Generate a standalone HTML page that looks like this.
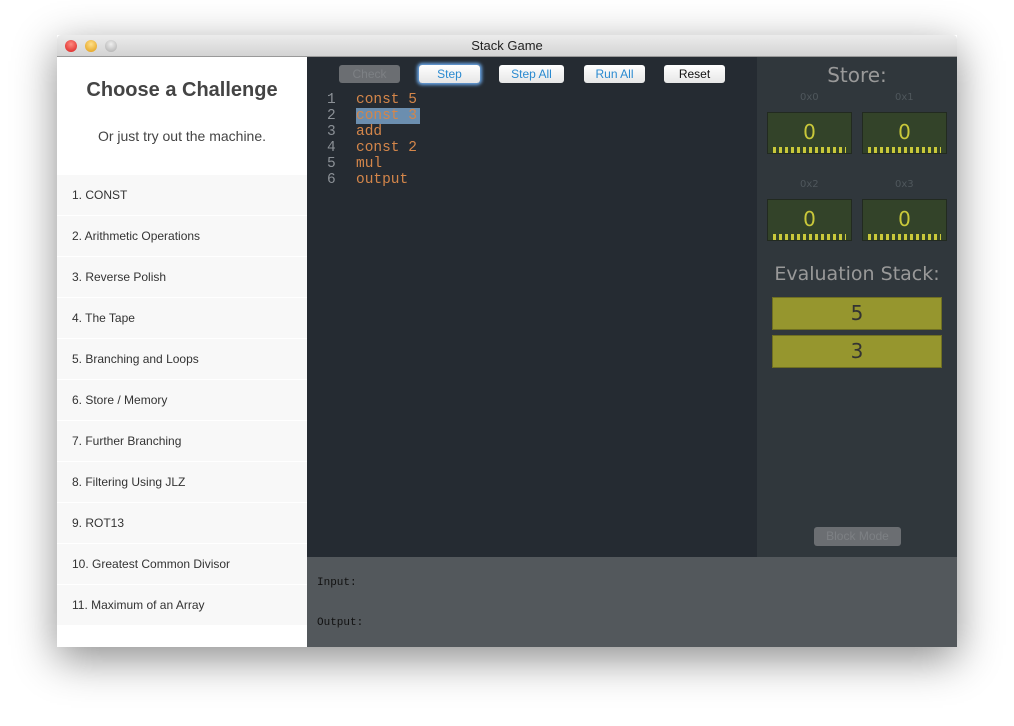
<!DOCTYPE html>
<html><head><style>
*{margin:0;padding:0;box-sizing:border-box}
body{width:1014px;height:726px;background:#fff;position:relative;font-family:"Liberation Sans",sans-serif;overflow:hidden}
.win{position:absolute;left:57px;top:35px;width:900px;height:612px;box-shadow:0 12px 40px rgba(0,0,0,.45);background:#fff}
.title{position:absolute;left:0;top:0;width:900px;height:22px;background:linear-gradient(#ececec,#d3d3d3);border-bottom:1px solid #999;text-align:center;font-size:13px;line-height:22px;color:#222;border-radius:4px 4px 0 0}
.dot{position:absolute;top:5px;width:12px;height:12px;border-radius:50%}
.abs{position:absolute}
.side{left:0;top:22px;width:250px;height:590px;background:#fff}
.li{position:absolute;left:0;width:250px;height:40px;background:#f8f8f8;font-size:12px;color:#333;padding-left:15px;line-height:40px}
.ed{left:250px;top:22px;width:450px;height:500px;background:#252b32}
.st{left:700px;top:22px;width:200px;height:500px;background:#30373c}
.bot{left:250px;top:522px;width:650px;height:90px;background:#53585c;font-family:"Liberation Mono",monospace;font-size:11px;color:#111}
.btn{position:absolute;top:8px;height:18px;border-radius:3px;background:linear-gradient(#fff,#e6e6e6);font-size:12px;text-align:center;line-height:18px;color:#2a8ad0}
.code{position:absolute;font-family:"Liberation Mono",monospace;font-size:14.5px;line-height:16px}
.cell{position:absolute;width:85px;height:42px;background:#334329;border:1px solid #222a20;color:#c9c83a;font-size:20px;text-align:center;line-height:38px;font-family:"DejaVu Sans",sans-serif}
.cell:after{content:"";position:absolute;left:5px;right:5px;bottom:0;height:6px;background:repeating-linear-gradient(90deg,#c9c83a 0 3px,transparent 3px 6px)}
.lab{position:absolute;font-size:10px;color:#4f575c;font-family:"DejaVu Sans",sans-serif}
.sk{position:absolute;left:15px;width:170px;height:33px;background:#96962e;border:1px solid #6f6f22;color:#333;font-size:20px;text-align:center;line-height:31px;font-family:"DejaVu Sans",sans-serif}
</style></head><body>
<div class="win">
<div class="title">Stack Game
<div class="dot" style="left:8px;background:radial-gradient(circle at 50% 35%,#ff8a80,#d81c1c)"></div>
<div class="dot" style="left:28px;background:radial-gradient(circle at 50% 35%,#ffe08a,#e09a10)"></div>
<div class="dot" style="left:48px;background:radial-gradient(circle at 50% 35%,#eee,#aaa)"></div>
</div>
<div class="abs side">
<div class="abs" style="top:22px;width:250px;text-align:center;font-size:20px;font-weight:bold;color:#444">Choose a Challenge</div>
<div class="abs" style="top:71px;width:250px;text-align:center;font-size:14px;color:#444">Or just try out the machine.</div>
<div class="li" style="top:118px">1. CONST</div>
<div class="li" style="top:159px">2. Arithmetic Operations</div>
<div class="li" style="top:200px">3. Reverse Polish</div>
<div class="li" style="top:241px">4. The Tape</div>
<div class="li" style="top:282px">5. Branching and Loops</div>
<div class="li" style="top:323px">6. Store / Memory</div>
<div class="li" style="top:364px">7. Further Branching</div>
<div class="li" style="top:405px">8. Filtering Using JLZ</div>
<div class="li" style="top:446px">9. ROT13</div>
<div class="li" style="top:487px">10. Greatest Common Divisor</div>
<div class="li" style="top:528px">11. Maximum of an Array</div>
</div>
<div class="abs ed">
<div class="btn" style="left:32px;width:61px;background:#6b6e72;color:#7d8084">Check</div>
<div class="btn" style="left:112px;width:61px;box-shadow:0 0 3px 2px #6aa7e8">Step</div>
<div class="btn" style="left:192px;width:65px">Step All</div>
<div class="btn" style="left:277px;width:61px">Run All</div>
<div class="btn" style="left:357px;width:61px;color:#111">Reset</div>
<div class="code" style="left:20px;top:35px;color:#8b9096">1<br>2<br>3<br>4<br>5<br>6</div>
<div class="abs" style="left:49px;top:51px;width:64px;height:16px;background:#6b8eaf"></div>
<div class="code" style="left:49px;top:35px;color:#d4864a">const 5<br>const 3<br>add<br>const 2<br>mul<br>output</div>
</div>
<div class="abs st">
<div class="abs" style="top:6px;width:200px;text-align:center;font-size:20px;color:#999;font-family:'DejaVu Sans',sans-serif">Store:</div>
<div class="lab" style="left:43px;top:35px">0x0</div>
<div class="lab" style="left:138px;top:35px">0x1</div>
<div class="cell" style="left:10px;top:55px">0</div>
<div class="cell" style="left:105px;top:55px">0</div>
<div class="lab" style="left:43px;top:122px">0x2</div>
<div class="lab" style="left:138px;top:122px">0x3</div>
<div class="cell" style="left:10px;top:142px">0</div>
<div class="cell" style="left:105px;top:142px">0</div>
<div class="abs" style="top:206px;width:200px;text-align:center;font-size:19px;color:#999;font-family:'DejaVu Sans',sans-serif">Evaluation Stack:</div>
<div class="sk" style="top:240px">5</div>
<div class="sk" style="top:278px">3</div>
<div class="abs" style="left:57px;top:470px;width:87px;height:19px;border-radius:3px;background:#6b6e72;color:#7d8084;font-size:12px;text-align:center;line-height:19px">Block Mode</div>
</div>
<div class="abs bot">
<div class="abs" style="left:10px;top:20px">Input:</div>
<div class="abs" style="left:10px;top:60px">Output:</div>
</div>
</div>
</body></html>
